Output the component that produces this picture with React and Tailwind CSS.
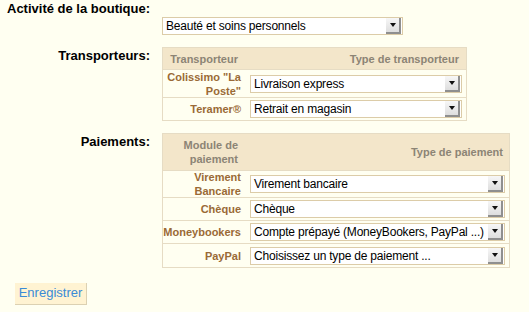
import React from "react";

function Select({ value, width }) {
  return (
    <div
      className="flex items-center h-[18px] border border-[#dccca8] bg-white"
      style={{ width }}
    >
      <span className="flex-1 pl-[3px] text-[12px] leading-[16px] tracking-[-0.2px] text-black whitespace-nowrap overflow-hidden">
        {value}
      </span>
      <div className="mr-px flex h-[16px] w-[15px] shrink-0 items-center justify-center border-r-2 border-b-2 border-[#8f8f8f] bg-gradient-to-b from-[#f7f7f7] to-[#dedede]">
        <div className="h-0 w-0 border-l-[3.5px] border-r-[3.5px] border-t-[4px] border-l-transparent border-r-transparent border-t-[#111]" />
      </div>
    </div>
  );
}

function Row({ label, value, h, selW, last }) {
  return (
    <div
      className={`flex items-center ${last ? "" : "border-b border-[#e6dcc4]"}`}
      style={{ height: h + (last ? 0 : 1) }}
    >
      <div className="w-[83px] pr-[5px] text-right text-[11px] font-bold leading-[14px] text-[#9a6a36]">
        {label}
      </div>
      <div className="pl-[4px]">
        <Select value={value} width={selW} />
      </div>
    </div>
  );
}

export default function App() {
  return (
    <div
      className="min-h-[312px] w-[529px] bg-[#fffff1] text-black"
      style={{ fontFamily: '"Liberation Sans", Arial, sans-serif' }}
    >
      <div className="pl-[7px] pt-[1px] text-[13px] font-bold leading-[16px]">
        Activité de la boutique:
      </div>
      <div className="pl-[162px]">
        <Select value="Beauté et soins personnels" width={241} />
      </div>

      <div className="mt-[12px] flex items-start">
        <div className="w-[150px] text-right text-[13px] font-bold leading-[16px] pt-[1px]">
          Transporteurs:
        </div>
        <div className="ml-[12px] w-[305px] border border-[#e6dcc4]">
          <div className="flex h-[22px] items-center border-b border-[#e6dcc4] bg-[#f3e6ca] text-[11px] font-bold leading-[14px] text-[#8c8475]">
            <div className="w-[83px] pr-[8px] text-right">Transporteur</div>
            <div className="flex-1 pr-[7px] text-right">Type de transporteur</div>
          </div>
          <Row label={'Colissimo "La Poste"'} value="Livraison express" h={27} selW={212} />
          <Row label="Teramer®" value="Retrait en magasin" h={22} selW={212} last />
        </div>
      </div>

      <div className="mt-[12px] flex items-start">
        <div className="w-[150px] text-right text-[13px] font-bold leading-[16px] pt-[1px]">
          Paiements:
        </div>
        <div className="ml-[12px] w-[348px] border border-[#e6dcc4]">
          <div className="flex h-[37px] items-center border-b border-[#e6dcc4] bg-[#f3e6ca] text-[11px] font-bold leading-[14px] text-[#8c8475]">
            <div className="w-[83px] pr-[8px] text-right">
              Module de
              <br />
              paiement
            </div>
            <div className="flex-1 pr-[6px] text-right">Type de paiement</div>
          </div>
          <Row label={<>Virement<br />Bancaire</>} value="Virement bancaire" h={26} selW={255} />
          <Row label="Chèque" value="Chèque" h={22} selW={255} />
          <Row label="Moneybookers" value="Compte prépayé (MoneyBookers, PayPal ...)" h={22} selW={255} />
          <Row label="PayPal" value="Choisissez un type de paiement ..." h={23} selW={255} last />
        </div>
      </div>

      <div className="mt-[12px] pl-[15px]">
        <button className="h-[22px] w-[72px] border-r border-b border-[#dcd1b2] bg-[#fff3d2] text-[13px] leading-[16px] text-[#3a8bd6]">
          Enregistrer
        </button>
      </div>
    </div>
  );
}
